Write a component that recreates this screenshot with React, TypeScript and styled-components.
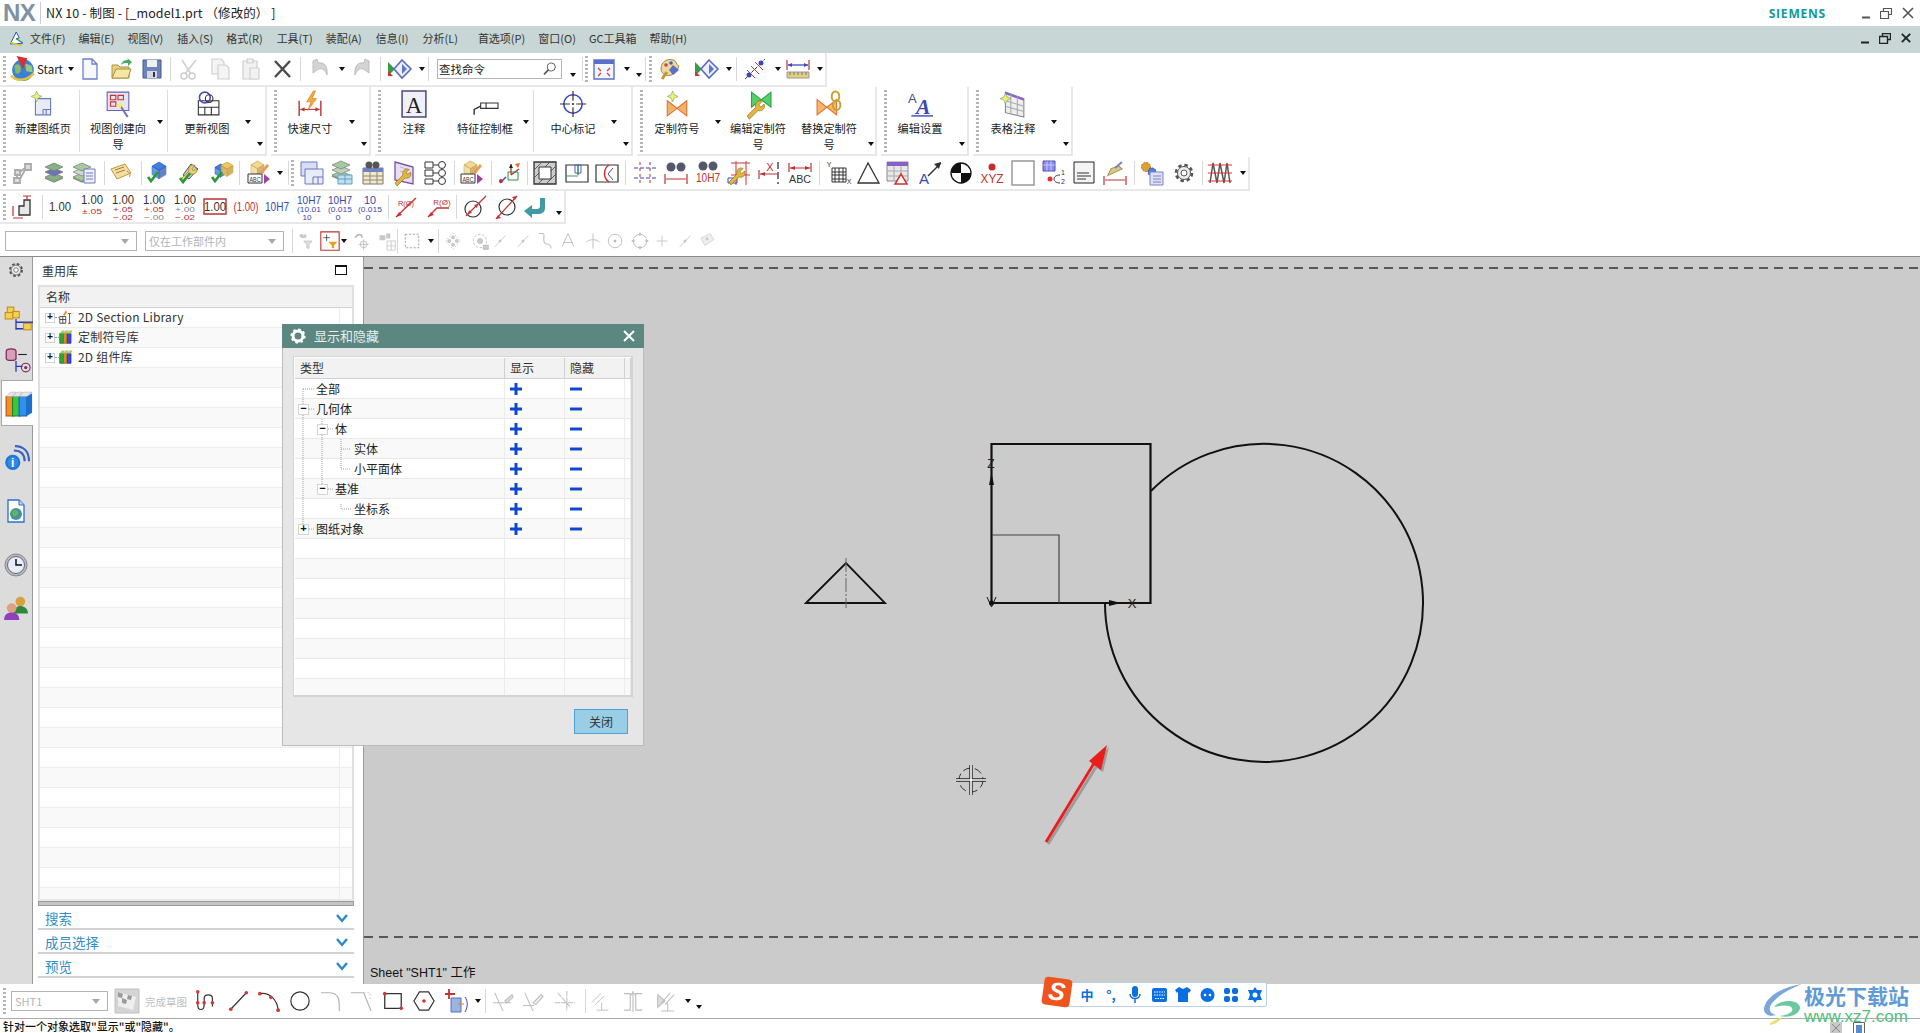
import React, { ReactNode } from 'react';
import styled, { createGlobalStyle } from 'styled-components';

const CJK = '"Noto Sans CJK SC", "Liberation Sans", sans-serif';

const Global = createGlobalStyle`
  html, body { margin: 0; padding: 0; background: #fff; overflow: hidden; }
  * { box-sizing: border-box; }
`;

const Page = styled.div`
  position: relative; width: 1920px; height: 1033px; overflow: hidden; display: flex; flex-direction: column;
  font-family: ${CJK}; color: #222; background: #fff;
`;

/* ---------- title + menu ---------- */
const TitleBar = styled.div`height: 26px; display: flex; align-items: center; flex: none;`;
const Logo = styled.div`
  width: 41px; height: 22px; padding-left: 3px; border-right: 1px solid #ccc;
  font: 700 24px/22px "Liberation Sans", sans-serif; color: #7d92a5; letter-spacing: -0.5px;
`;
const TitleText = styled.div`margin-left: 5px; margin-top: -2px; font-size: 12.5px; letter-spacing: 0.1px; white-space: pre;`;
const Brand = styled.div`
  margin-left: auto; margin-right: 36px; font: 700 12px "Open Sans", "Liberation Sans", sans-serif; color: #0d9a9c; letter-spacing: 0.8px;
`;
const WinButtons = styled.div`display: flex; align-items: center; gap: 10px; padding-right: 6px;`;
const MenuBar = styled.div`
  height: 27px; flex: none; background: #c8d6d5; display: flex; align-items: center; padding: 0 0 3px 4px; font-size: 11px; color: #333;
`;
const MenuIcon = styled.div`width: 22px; height: 18px; margin-right: 4px; display: flex; justify-content: flex-end;`;
const MenuItem = styled.span<{ $ml: number }>`margin-left: ${p => p.$ml}px; white-space: nowrap; line-height: 16px;`;

/* ---------- strips ---------- */
const Row = styled.div<{ $h: number }>`height: ${p => p.$h}px; flex: none; display: flex; background: #fff;`;
const StripBar = styled.div<{ $w: number }>`
  width: ${p => p.$w}px; height: 100%; display: flex; align-items: center; border-right: 2px solid #e8e8e8; border-bottom: 2px solid #e8e8e8;
`;
const BareBar = styled(StripBar)`border-right: none; border-bottom: none; padding-top: 2px;`;
const Slot = styled.div<{ $w: number; $ml: number }>`
  flex: none; width: ${p => p.$w}px; margin-left: ${p => p.$ml}px; display: flex; align-items: center; justify-content: center;
`;
const Grip = styled.div`
  width: 3px; height: 26px; background: repeating-linear-gradient(#b4b4b4 0 2px, transparent 2px 4px);
`;
const Sep = styled.div`width: 1px; height: 24px; background: #d8d8d8;`;
const Caret = styled.div<{ $low?: boolean }>`
  width: 0; height: 0; border-left: 3.5px solid transparent; border-right: 3.5px solid transparent; border-top: 4px solid #111;
  margin-top: ${p => (p.$low ? 12 : 0)}px;
`;
const StartLabel = styled.span`font-size: 11.5px; color: #222;`;
const SearchBox = styled.div`
  width: 125px; height: 20px; border: 1px solid #b5b5b5; display: flex; align-items: center; justify-content: space-between; padding: 0 3px 0 1px;
  font-size: 11.5px; color: #222;
`;
const SelectBox = styled.div<{ $w: number }>`
  width: ${p => p.$w}px; height: 20px; border: 1px solid #b4b4b4; display: flex; align-items: center; justify-content: space-between; padding: 0 7px 0 3px;
  font-size: 11px; color: #b4b4b4; white-space: nowrap;
`;
const GrayCaret = styled.div`
  width: 0; height: 0; border-left: 4px solid transparent; border-right: 4px solid transparent; border-top: 5px solid #a8a8a8;
`;
const FinishLabel = styled.span`font-size: 10.5px; color: #c0c0c0; white-space: nowrap;`;

/* ---------- ribbon ---------- */
const Ribbon = styled.div`height: 70px; flex: none; display: flex; gap: 4px;`;
const RibbonGroup = styled.div<{ $w: number }>`
  position: relative; width: ${p => p.$w}px; height: 69px; display: flex; border-right: 2px solid #e8e8e8; border-bottom: 2px solid #e8e8e8; padding-left: 4px;
`;
const RibbonGrip = styled.div`
  position: absolute; left: 3px; top: 3px; width: 3px; height: 62px;
  background: repeating-linear-gradient(#b4b4b4 0 2px, transparent 2px 4px);
`;
const RibbonMore = styled.div<{ $r: number }>`position: absolute; right: ${p => p.$r}px; bottom: 8px;`;
const RibbonItem = styled.div<{ $w: number; $line?: boolean; $lead: number }>`
  position: relative; flex: none; width: ${p => p.$w}px; height: 62px; margin-top: 3px; display: flex; padding-left: ${p => p.$lead}px;
  border-right: ${p => (p.$line ? '1px solid #dcdcdc' : 'none')};
`;
const RibbonBody = styled.div<{ $w: number }>`
  flex: none; width: ${p => p.$w}px; display: flex; flex-direction: column; align-items: center; padding-top: 1px;
`;
const RibbonLabel = styled.div`
  margin-top: 3px; font-size: 11.2px; line-height: 16px; text-align: center; white-space: nowrap; color: #222;
`;
const RibbonCaret = styled.div<{ $ml: number }>`margin-left: ${p => p.$ml}px; padding-top: 30px;`;

/* ---------- main ---------- */
const Main = styled.div`height: 728px; flex: none; display: flex; border-top: 1px solid #8a8a8a;`;
const SideTabs = styled.div`
  flex: none; width: 33px; background: #dcdcdc; border-right: 1px solid #9a9a9a; display: flex; flex-direction: column; align-items: center;
`;
const SideSlot = styled.div<{ $mt: number }>`margin-top: ${p => p.$mt}px; height: 24px; display: flex; align-items: center; justify-content: center;`;
const ActiveTab = styled.div`
  margin-top: 7px; width: 33px; height: 46px; margin-left: 2px; background: #fff; border: 1px solid #a8a8a8; border-right: none;
  display: flex; align-items: center; justify-content: center;
`;
const Panel = styled.div`flex: none; width: 331px; background: #fff; border-right: 1px solid #9a9a9a; padding: 0 9px 0 5px; display: flex; flex-direction: column;`;
const PanelHead = styled.div`height: 28px; display: flex; align-items: center; justify-content: space-between; padding: 0 7px 2px 4px; font-size: 12px; color: #333;`;
const MaxBox = styled.div`width: 12px; height: 10px; border: 1px solid #111; border-top-width: 2px;`;
const LibTable = styled.div`height: 616px; border: 2px solid #e0e0e0; border-bottom-color: #e8e8e8; overflow: hidden; flex: none;`;
const LibHead = styled.div`height: 21px; background: #f2f2f2; border-bottom: 1px solid #d4d4d4; padding-left: 6px; font-size: 12px; line-height: 19px; color: #333;`;
const LibRow = styled.div<{ $alt: boolean }>`
  height: 20px; display: flex; align-items: center; background: ${p => (p.$alt ? '#f9f9f9' : '#fff')}; border-bottom: 1px solid #ececec; position: relative;
  &::after { content: ''; position: absolute; left: 299px; top: 0; bottom: 0; width: 1px; background: #ececec; }
`;
const ExpanderGap = styled.span`width: 5px; flex: none;`;
const Expander = styled.div`
  flex: none; width: 10px; height: 10px; border: 1px solid #d0d0d0; background: #fff; font: 700 10px/8px "Liberation Mono", monospace; text-align: center; color: #111;
`;
const LibLabel = styled.span`margin-left: 1px; margin-top: -2px; font-size: 12px; letter-spacing: 0.2px; color: #333; white-space: nowrap;`;
const Dots = styled.div`width: 4px; height: 0; border-top: 1px dotted #999; flex: none;`;
const Grabber = styled.div`height: 5px; flex: none; background: #c4c4c4; border: 1px solid #9a9a9a;`;
const Section = styled.div`
  height: 24px; flex: none; border-bottom: 2px solid #d2d2d2; display: flex; align-items: center; justify-content: space-between; padding: 2px 6px 0 7px;
  font-size: 13.5px; color: #2f8fc6;
`;
const Canvas = styled.div`position: relative; flex: 1; background: #cbcbcb; overflow: hidden;`;
const SheetLabel = styled.div`
  position: absolute; left: 6px; bottom: 3px; font: 12.5px "Liberation Sans", ${CJK}; color: #111; white-space: nowrap;
`;

/* ---------- dialog ---------- */
const Dialog = styled.div`
  position: absolute; left: 282px; top: 324px; width: 362px; height: 422px; background: #e6e6e6; border: 1px solid #bcbcbc; display: flex; flex-direction: column;
`;
const DialogTitle = styled.div`
  height: 24px; flex: none; margin: -1px -1px 0; background: #5c8780; display: flex; align-items: center; padding: 0 9px 2px 8px; color: #e6efed; font-size: 13px; gap: 8px;
`;
const DialogGear = styled.div`display: flex; margin-top: 2px;`;
const DialogClose = styled.div`margin-left: auto; display: flex; margin-top: 2px;`;
const TypeTable = styled.div`
  position: relative; margin: 8px 10px 0; height: 341px; flex: none; background: #fff; border: 1px solid #d4d4d4; border-width: 1px 2px 2px 1px; padding: 1px 0 0 1px; overflow: hidden;
`;
const GridRow = styled.div<{ $alt?: boolean; $head?: boolean }>`
  height: ${p => (p.$head ? 21 : 20)}px; display: grid; grid-template-columns: 210px 60px 60px 1fr; align-items: stretch;
  background: ${p => (p.$head ? '#f2f2f2' : p.$alt ? '#f9f9f9' : '#fff')};
  border-bottom: 1px solid ${p => (p.$head ? '#d0d0d0' : '#e8e8e8')}; font-size: 12px; line-height: 20px; color: #222;
`;
const HeadCell = styled.div`padding-left: 5px; border-right: 1px solid #d0d0d0; color: #333;`;
const Cell = styled.div`border-right: 1px solid #ececec; display: flex; align-items: center; padding-left: 5px;`;
const TreeCell = styled.div<{ $lvl: number }>`
  position: relative; z-index: 1; border-right: 1px solid #ececec; display: flex; align-items: center; padding-left: ${p => 3 + p.$lvl * 19}px; white-space: nowrap;
`;
const TreeBox = styled.div<{ $empty?: boolean }>`
  flex: none; width: 11px; height: 11px; margin-right: 7px; font: 700 11px/9px "Liberation Mono", monospace; text-align: center; color: #111;
  border: 1px solid ${p => (p.$empty ? 'transparent' : '#d4d4d4')}; background: ${p => (p.$empty ? 'transparent' : '#fff')};
`;
const TreeGuides = styled.svg`position: absolute; left: 0; top: 22px; pointer-events: none;`;
const DialogFoot = styled.div`flex: 1; display: flex; align-items: flex-start; justify-content: flex-end; padding: 12px 15px 0 0;`;
const CloseBtn = styled.div`
  width: 54px; height: 25px; background: #9acde6; border: 1px solid #4aa3d8; text-align: center; font-size: 12px; line-height: 23px; color: #333;
`;

/* ---------- bottom ---------- */
const BottomBar = styled.div`height: 34px; flex: none; display: flex; background: #fff;`;
const Status = styled.div`
  height: 15px; flex: none; border-top: 1px solid #aaa; padding-left: 3px; font-size: 11px; font-weight: 500; line-height: 14px; color: #111; white-space: nowrap;
`;
const StatusIcons = styled.div`position: absolute; left: 1830px; top: 1022px; display: flex; gap: 11px;`;

const Sogou = styled.div`
  position: absolute; left: 1060px; top: 982px; width: 207px; height: 25px; background: #fff; border: 1px solid #b8d0ea; border-radius: 2px;
  display: flex; align-items: center; padding-left: 14px; color: #0a6fe0;
`;
const SogouChar = styled.span`width: 24px; text-align: center; font-weight: 700; font-size: 13px; flex: none; line-height: 16px;`;
const SogouSlot = styled.div`width: 24px; flex: none; display: flex; justify-content: center;`;
const SogouLogo = styled.div`
  position: absolute; left: 1043px; top: 978px; width: 28px; height: 28px; background: #f0541e; border-radius: 4px; transform: rotate(8deg);
  color: #fff; font: italic 900 25px/27px "Liberation Sans", sans-serif; text-align: center;
`;
const Watermark = styled.div`position: absolute; left: 1762px; top: 983px; width: 150px; height: 42px; display: flex;`;
const WmText = styled.div`margin-left: 0; display: flex; flex-direction: column;`;
const WmMain = styled.div`font-size: 21px; font-weight: 700; line-height: 24px; color: #5f9bd6;`;
const WmSub = styled.div`font: 17px/20px "Liberation Sans", sans-serif; color: #52c07c;`;

/* ---------- icons ---------- */
const Txt = ({ x = 12, y, s = 9, c = '#333', w = 400, len, a = 'middle', children }: any) => (
  <text x={x} y={y} fontSize={s} fill={c} fontWeight={w} textAnchor={a} fontFamily='"Liberation Sans", sans-serif'
    textLength={len} lengthAdjust={len ? 'spacingAndGlyphs' : undefined}>{children}</text>
);
const Dim = ({ top = '1.00', l1, l2, c1 = '#b33', c2 = '#b33', tc = '#333', tone }: any) => (
  <>
    <Txt x={15} y={tone ? 20 : 13} s={tone ? 13 : 12} c={tc} len={22}>{top}</Txt>
    {l1 && <Txt x={15} y={l2 ? 21 : 23} s={8} c={c1} len={20}>{l1}</Txt>}
    {l2 && <Txt x={15} y={29} s={8} c={c2} len={20}>{l2}</Txt>}
  </>
);
const Fit = ({ a, b, c = '#3946b0', top }: any) => (
  <>
    <Txt x={15} y={13} s={11} c={c} len={top.length > 2 ? 24 : 12}>{top}</Txt>
    <Txt x={15} y={21} s={7.500} c={c} len={24}>{a}</Txt>
    <Txt x={13} y={29} s={7.500} c={c} len={b.length > 1 ? 9 : 5}>{b}</Txt>
  </>
);

const cube = (x: number, y: number, s: number, f: string, d: string) => (
  <>
    <path d={`M${x} ${y + s * .3}l${s * .5} -${s * .3} ${s * .5} ${s * .3} -${s * .5} ${s * .3}z`} fill={f} stroke={d} strokeWidth=".6" />
    <path d={`M${x} ${y + s * .3}v${s * .6}l${s * .5} ${s * .3}v-${s * .6}z`} fill={f} stroke={d} strokeWidth=".6" opacity=".8" />
    <path d={`M${x + s} ${y + s * .3}v${s * .6}l-${s * .5} ${s * .3}v-${s * .6}z`} fill={d} stroke={d} strokeWidth=".6" opacity=".7" />
  </>
);
const check = (x: number, y: number) => <path d={`M${x} ${y}l3 4 7-9`} stroke="#2b9a35" strokeWidth="2.6" fill="none" />;
const layers = (c1: string, c2: string) => (
  <>
    {[15, 10, 5].map((y, i) => <path key={y} d={`M12 ${y - 3}l9 4-9 4-9-4z`} fill={i === 1 ? c2 : c1} stroke="#6e7e6e" strokeWidth=".7" />)}
    <path d="M3 17l9 4 9-4" fill="none" stroke="#7d9a7d" strokeWidth="1.4" />
  </>
);
const wrench = (c = '#e2b440') => <path d="M3 21l8-8c-1-3 1-6 4-6l2 .5-3 3 1.5 2.500 3-3 .5 2c0 3-3 5-6 4l-8 8z" fill={c} stroke="#9a7a20" strokeWidth=".7" />;

const ICONS: Record<string, ReactNode> = {
  nxmenu: <><path d="M3 20L11 4l4 8-4 1 9 6z" fill="#fff" stroke="#2c52b0" strokeWidth="1.3" /><path d="M3 18l15 4" stroke="#e2c020" strokeWidth="2" /><path d="M11 13l8 5" stroke="#2aa050" strokeWidth="1.4" /></>,
  start: <><circle cx="12" cy="13" r="10" fill="#3c80d4" /><path d="M4 9c3-3 6-1 6 3s-3 5-5 4z" fill="#86b968" /><path d="M14 7l6 2 1 6-6-1z" fill="#99c780" /><path d="M6 0l10 2-4 10z" fill="#d6322c" /><path d="M1 18c5 6 14 5 21-2" stroke="#e6c23c" strokeWidth="2.400" fill="none" /></>,
  newdoc: <path d="M5 2h9l5 5v15H5z M14 2v5h5" fill="#f7f8ff" stroke="#6c80cc" strokeWidth="1.3" />,
  open: <><path d="M3 21V8h6l2 2h9v11z" fill="#e8d27e" stroke="#a89040" /><path d="M3 21l4-9h15l-3 9z" fill="#f5e6a6" stroke="#a89040" /><path d="M12 8c1-4 4-5 7-5l-1-2 5 4-4 4v-3c-3 0-5 0-7 2z" fill="#48a860" /></>,
  save: <><path d="M3 3h18v18H3z" fill="#6e84b8" stroke="#45588a" /><path d="M7 3h10v7H7z" fill="#eef0f6" /><path d="M7 14h10v7H7z" fill="#d4d8e4" /><path d="M13 15h2v5h-2z" fill="#333" /></>,
  scissors: <g fill="none" stroke="#cfcfcf" strokeWidth="1.500"><circle cx="7" cy="19" r="3" /><circle cx="15" cy="19" r="3" /><path d="M8 17L19 3M14 17L5 3" /></g>,
  copy: <g fill="#f4f4f4" stroke="#cfcfcf" strokeWidth="1.200"><path d="M4 2h9l3 3v12H4z" /><path d="M10 8h8l3 3v11H10z" /></g>,
  paste: <g fill="#f2f2f2" stroke="#cfcfcf" strokeWidth="1.200"><path d="M4 4h14v18H4z" /><path d="M8 2h6v4H8z" /><path d="M11 11h9v11h-9z" /></g>,
  del: <path d="M5 4l15 16M20 4L5 20" stroke="#4a4a4a" strokeWidth="2.400" />,
  undo: <path d="M5 4v12l4-3c4-3 8-1 10 5 1-9-3-13-9-12l-1-4z" fill="#d4d4d4" stroke="#bdbdbd" />,
  redo: <path d="M19 4v12l-4-3c-4-3-8-1-10 5-1-9 3-13 9-12l1-4z" fill="#d4d4d4" stroke="#bdbdbd" />,
  play: <><path d="M1 5l7 7-7 7z" fill="#3a9a4a" /><path d="M1 14l5 5H1z" fill="#d03030" /><path d="M15 3l9 9-9 9-8-9z" fill="#eef" stroke="#5a6cc0" strokeWidth="1.600" /><path d="M15 7l5 5-5 5z" fill="#5a78d0" /></>,
  magnifier: <><circle cx="14" cy="9" r="6" fill="#fff" stroke="#555" strokeWidth="1.400" /><path d="M10 13l-7 7" stroke="#555" strokeWidth="2.400" /></>,
  viewfit: <><path d="M2 3h20v19H2z" fill="#f4f6ff" stroke="#5a70c8" strokeWidth="1.400" /><path d="M2 3h20v4H2z" fill="#5a70c8" /><path d="M6 11l3 3M18 11l-3 3M6 19l3-3M18 19l-3-3" stroke="#d04030" strokeWidth="1.300" /></>,
  palette: <><path d="M3 12C3 5 9 1 15 3c4 1 3 5 6 6-2 6-7 11-13 9-3-1-5-3-5-6z" fill="#ecd9a0" stroke="#a08840" /><circle cx="8" cy="8" r="1.800" fill="#d04040" /><circle cx="13" cy="6" r="1.800" fill="#4060c0" /><path d="M15 8l6 5-6 5-4-5z" fill="#5a70c8" /><path d="M4 22l5-7" stroke="#c09830" strokeWidth="3" /></>,
  measure: <><path d="M2 22L22 2" stroke="#444" strokeDasharray="8 1" /><path d="M4 13l8 8M8 9l8 8M12 5l8 8" stroke="#d03838" /><circle cx="6" cy="18" r="2.500" fill="#3a48b8" /><circle cx="18" cy="6" r="2.500" fill="#3a48b8" /></>,
  ruler: <><path d="M1 3v10M23 3v10" stroke="#b33" strokeWidth="1.200" /><path d="M2 8h20" stroke="#3a48b8" strokeWidth="1.300" /><path d="M2 8l4-2v4zM22 8l-4-2v4z" fill="#3a48b8" /><path d="M1 15h22v6H1z" fill="#e0cf80" stroke="#999" /><path d="M4 15v3M8 15v3M12 15v3M16 15v3M20 15v3" stroke="#666" strokeWidth=".8" /></>,

  newsheet: <><path d="M5 7l14 0v15H5z" fill="#e8ecf8" stroke="#6a78c0" /><path d="M12 17h7M12 17v5M15 17v5" stroke="#6a78c0" /><path d="M6 0l1.500 3.500L11 5 7.500 6.500 6 10 4.500 6.500 1 5l3.500-1.500z" fill="#f2ee70" stroke="#6ea890" strokeWidth=".6" /></>,
  viewwiz: <><path d="M2 1h20v17H2z" fill="#e4e4f4" stroke="#6a60b0" /><path d="M5 4h5v4H5zM12 4h5v4h-5zM5 10h5v4H5z" fill="none" stroke="#c83030" /><path d="M13 12l8 12" stroke="#7a70c8" strokeWidth="2" /><path d="M14 9l1 3 3 1-3 1-1 3-1-3-3-1 3-1z" fill="#f4f060" /></>,
  updview: <><path d="M4 9h19v6H4zM4 15h19v7H4zM10 15v7M16 15v7" fill="#fff" stroke="#333" /><circle cx="10" cy="6" r="5" fill="none" stroke="#4a50c0" strokeWidth="1.500" /><circle cx="14" cy="7" r="3.500" fill="none" stroke="#333" /></>,
  quickdim: <><path d="M2 9v14M22 9v14" stroke="#b33" strokeWidth="1.300" /><path d="M3 17h18" stroke="#b33" /><path d="M3 17l4-2v4zM21 17l-4-2v4z" fill="#b33" /><path d="M15 0l-6 10h4l-3 8 8-11h-4l3-7z" fill="#f0b030" stroke="#d86020" strokeWidth=".5" /></>,
  noteA: <><path d="M1 0h22v24H1z" fill="#f0f0fa" stroke="#4a4a80" strokeWidth="1.400" /><text x="12" y="20" fontSize="21" textAnchor="middle" fontFamily='"Liberation Serif", serif' fill="#222">A</text></>,
  fcf: <><path d="M8 11h16v5H8z" fill="#fff" stroke="#333" /><path d="M13 11v5" stroke="#333" /><path d="M8 14L2 17v5" fill="none" stroke="#333" strokeWidth="1.300" /></>,
  center: <><circle cx="12" cy="12" r="8.500" fill="none" stroke="#3a48b8" strokeWidth="1.400" /><path d="M12 0v9M12 11v2M12 15v9M0 12h9M11 12h2M15 12h9" stroke="#333" strokeWidth="1.100" /></>,
  custsym: <><path d="M3 9l9 7-9 7zM21 9l-9 7 9 7z" fill="#f0b468" stroke="#e07030" /><path d="M8 0l1.500 3.500L13 5 9.500 6.500 8 10 6.500 6.500 3 5l3.500-1.500z" fill="#f4f060" stroke="#70a090" strokeWidth=".6" /></>,
  editsym: <><path d="M6 1l9 7-9 7zM24 1l-9 7 9 7z" fill="#52d06a" stroke="#30a050" /><g transform="translate(-1 2)">{wrench()}</g></>,
  replsym: <><path d="M1 8l9 7-9 7zM19 8l-9 7 9 7z" fill="#f4b868" stroke="#e07030" /><ellipse cx="18" cy="5" rx="3.500" ry="4.500" fill="none" stroke="#c8a030" strokeWidth="1.800" /><ellipse cx="19" cy="13" rx="3.500" ry="4.500" fill="none" stroke="#c8a030" strokeWidth="1.800" /></>,
  editset: <><text x="5" y="11" fontSize="12" fontFamily='"Liberation Sans", sans-serif' fill="#4a4a88" textAnchor="middle">A</text><text x="15" y="21" fontSize="20" fontWeight="700" fontStyle="italic" fontFamily='"Liberation Serif", serif' fill="#3a48b8" textAnchor="middle">A</text><path d="M4 23h20" stroke="#3a48b8" strokeWidth="1.300" /></>,
  tablenote: <><path d="M5 1l17 6v17L5 20z" fill="#eee" stroke="#888" /><path d="M5 1l17 6v2L5 3z" fill="#8a60c8" /><path d="M5 9l17 5M5 14l17 5M10 3v18M16 5v18" stroke="#aaa" /><path d="M5 2l1.500 3.500L10 7 6.500 8.500 5 12 3.500 8.500 0 7l3.500-1.500z" fill="#f4f060" stroke="#70a090" strokeWidth=".6" /></>,

  assy: <g fill="none" stroke="#aaa" strokeWidth="1.800"><path d="M4 9h5v5H4zM14 3h6v6h-6zM3 17h6v5H3z" fill="#ddd" /><path d="M9 11l5-4M6 14v3M14 9l-5 9" /></g>,
  layerA: layers('#88b080', '#7070c0'),
  layerL: <><g transform="translate(-3 0)">{layers('#a8c8a0', '#d0d8d0')}</g><path d="M11 8h11v14H11z" fill="#eef0fa" stroke="#7078b8" /><path d="M13 12h7M13 15h7M13 18h7" stroke="#7078b8" /></>,
  note: <><path d="M2 8l14-5 6 9-14 6z" fill="#f4dea0" stroke="#c09840" /><path d="M6 9l9-3M7 12l9-3" stroke="#a08040" /><path d="M18 10c3 2 4 5 2 6" stroke="#c08040" fill="none" /></>,
  cubeOk: <>{cube(6, 1, 14, '#3f7fe0', '#1f4fa8')}{check(2, 16)}</>,
  toolOk: <><path d="M5 14L13 3l7 5-9 10z" fill="#c8c8ee" stroke="#555" /><g transform="translate(0 -3)">{wrench('#e8d070')}</g>{check(2, 17)}</>,
  cube2Ok: <>{cube(5, 3, 11, '#3f7fe0', '#1f4fa8')}{cube(11, 1, 12, '#f0c860', '#c09020')}{check(2, 16)}</>,
  cubeAbc: <>{cube(5, 0, 13, '#f2d890', '#c09840')}<path d="M2 13h14v9H2z" fill="#fff" stroke="#333" /><Txt x={9} y={21} s={7} len={11}>ABC</Txt><path d="M18 13l6 5-6 5z" fill="#a040a0" /><path d="M14 11l7-8 2 2-7 8z" fill="#f09850" /></>,
  sheetView: <><path d="M2 1h16v14H2z" fill="#d8def4" stroke="#6a78c0" /><path d="M6 8h18v15H6z" fill="#e8ecf8" stroke="#6a78c0" /><path d="M14 16h10M14 16v7M19 16v7" stroke="#6a78c0" /></>,
  layerV: <><g transform="translate(-1 -2)">{layers('#a8c8a0', '#c0d0c0')}</g><path d="M8 14h14v9H8z" fill="#bfe0ee" stroke="#60a0c0" /><path d="M15 14v9M8 18h14" stroke="#60a0c0" /></>,
  tableBino: <><path d="M2 7h20v16H2z" fill="#f6e8c0" stroke="#777" /><path d="M2 7h20v4H2z" fill="#7080d0" /><path d="M2 15h20M2 19h20M9 7v16M16 7v16" stroke="#888" /><circle cx="8" cy="4" r="3.500" fill="#555" /><circle cx="15" cy="4" r="3.500" fill="#555" /></>,
  wrenchPage: <><path d="M3 1l18 5v17L3 19z" fill="#e8e0f0" stroke="#7a50a8" strokeWidth="1.300" /><path d="M8 6l10 3M8 10l10 3" stroke="#bbb" /><g transform="translate(0 1)">{wrench()}</g></>,
  list123: <g fill="#fff" stroke="#333"><circle cx="19" cy="4" r="3.500" /><circle cx="19" cy="12" r="3.500" /><circle cx="19" cy="20" r="3.500" /><path d="M2 1h8v6H2zM2 9h8v6H2zM2 18h8v5H2z" /><path d="M10 4h5M10 12h5M10 20h5" fill="none" /></g>,
  axes: <><path d="M13 14V3M13 14l8-6" stroke="#c03030" strokeWidth="1.300" /><path d="M10 11h10v8H10z" fill="none" stroke="#2a9040" /><path d="M13 3l-2 4h4z" fill="#222" /><path d="M2 22l6-6" stroke="#3a48b8" strokeWidth="1.500" /><circle cx="3" cy="20" r="2" fill="#c03030" /><path d="M17 3l5-1-2 5z" fill="#e07030" /></>,
  hatch: <><path d="M1 1h22v22H1z" fill="#ccc" stroke="#333" strokeWidth="1.300" /><path d="M1 9L9 1M1 17L17 1M5 23L23 5M13 23L23 13" stroke="#555" strokeWidth=".9" /><path d="M6 6h12v12H6z" fill="#fff" stroke="#333" /></>,
  sectBox: <><path d="M1 4h22v17H1z" fill="#fff" stroke="#333" strokeWidth="1.200" /><path d="M13 4v10" stroke="#2a9040" strokeWidth="1.500" /><path d="M10 4h6v8h-6z" fill="none" stroke="#5060c0" /><path d="M1 15h12" stroke="#3aa050" /></>,
  detail: <><path d="M1 4h22v17H1z" fill="#fff" stroke="#333" strokeWidth="1.200" /><path d="M14 4c-6 4-6 13 0 17" fill="none" stroke="#d03030" strokeWidth="1.500" /><path d="M18 7l-5 6 5 6" fill="none" stroke="#3a48b8" /></>,
  clines: <g stroke="#c84040" strokeWidth="1.100" fill="none"><path d="M1 7h22" strokeDasharray="4 2" stroke="#3a48b8" /><path d="M1 17h22" strokeDasharray="4 2" stroke="#3a48b8" /><path d="M7 1v22M17 1v22" strokeDasharray="3 3" /></g>,
  binoDim: <><circle cx="7" cy="6" r="4.500" fill="#55586a" /><circle cx="17" cy="6" r="4.500" fill="#55586a" /><path d="M1 13v10M23 13v10" stroke="#b33" strokeWidth="1.200" /><path d="M2 18h20" stroke="#b33" /></>,
  h7Bino: <><circle cx="7" cy="5" r="4.500" fill="#55586a" /><circle cx="17" cy="5" r="4.500" fill="#55586a" /><Txt y={21} s={12} c="#b33" len={24}>10H7</Txt></>,
  wrenchGrid: <><path d="M6 1h18v18H6z" fill="#f6f6f6" /><path d="M5 2h19M5 14h19M10 0v24M20 0v24" stroke="#c84040" /><path d="M2 17h9v5H2z" fill="none" stroke="#3a48b8" />{wrench()}</>,
  dimX: <><path d="M21 1v22" stroke="#333" strokeDasharray="7 3" strokeWidth="1.300" /><path d="M2 9v9" stroke="#b33" strokeWidth="1.200" /><path d="M3 13h17" stroke="#b33" /><path d="M3 13l5-2v4z" fill="#b33" /><Txt x={13} y={10} s={11} c="#b33">X</Txt></>,
  dimAbc: <><path d="M1 2v9M23 2v9" stroke="#b33" strokeWidth="1.200" /><path d="M2 7h20" stroke="#b33" /><path d="M2 7l5-2v4zM22 7l-5-2v4z" fill="#b33" /><Txt y={22} s={11} c="#333" len={22}>ABC</Txt></>,
  gridXY: <><path d="M6 7h14v14H6z" fill="#fff" stroke="#333" /><path d="M9 7v14M13 7v14M17 7v14M6 11h14M6 14h14M6 18h14" stroke="#333" /><Txt x={3} y={6} s={7}>Y</Txt><Txt x={23} y={23} s={7}>X</Txt></>,
  tri: <path d="M12 2L2 22h21z" fill="none" stroke="#333" strokeWidth="1.300" />,
  tableTri: <><path d="M1 1h21v19H1z" fill="#e8e8e8" stroke="#888" /><path d="M1 1h21v4H1z" fill="#8a60c8" /><path d="M1 10h21M1 15h21M8 5v15M15 5v15" stroke="#aaa" /><path d="M15 13l-6 10h12z" fill="#fff" stroke="#d03030" strokeWidth="1.500" /></>,
  arrowA: <><path d="M10 15L23 2" stroke="#333" strokeWidth="1.400" /><path d="M23 1l-7 2 5 5z" fill="#333" /><Txt x={6} y={23} s={15} c="#3a48b8">A</Txt></>,
  checker: <><circle cx="12" cy="12" r="10" fill="#fff" stroke="#111" strokeWidth="1.300" /><path d="M12 2a10 10 0 0 0-10 10h10zM12 12h10a10 10 0 0 1-10 10z" fill="#111" /></>,
  xyz: <><circle cx="12" cy="6" r="3.500" fill="#d02828" /><Txt y={22} s={12} c="#b33" len={23}>XYZ</Txt></>,
  blank: <path d="M1 0h22v24H1z" fill="#fff" stroke="#999" strokeWidth="1.500" />,
  balloon: <><path d="M1 0h12v10H1z" fill="#8c8cf0" stroke="#5050b0" /><path d="M1 4h12M5 0v10M9 0v10" stroke="#fff" strokeWidth=".5" /><circle cx="8" cy="18" r="2.500" fill="#e03030" /><path d="M18 14c-4 0-6 2-6 4s2 4 6 4" fill="none" stroke="#333" /><Txt x={21} y={14} s={7}>1</Txt><Txt x={21} y={23} s={7}>2</Txt></>,
  textBox: <><path d="M2 1h20v21H2z" fill="#f4f4f4" stroke="#222" /><path d="M5 12h12M5 15h14M5 18h9" stroke="#333" strokeWidth="1.200" /></>,
  broom: <><path d="M3 11h16l-2-4-8-1z" fill="#d8c888" stroke="#a09050" transform="rotate(-25 12 9)" /><path d="M12 7l7-6" stroke="#7880c8" strokeWidth="2" /><path d="M1 15v9M23 15v9" stroke="#b33" strokeWidth="1.200" /><path d="M2 19h20" stroke="#b33" /></>,
  gearList: <><circle cx="6" cy="6" r="4.500" fill="#e0a030" stroke="#a87020" strokeDasharray="2 1" /><circle cx="12" cy="11" r="4" fill="#5080d8" stroke="#3050a0" strokeDasharray="2 1" /><path d="M10 11h13v13H10z" fill="#dde2fa" stroke="#7a80c8" /><path d="M13 15h8M13 18h8M13 21h8" stroke="#7a80c8" /></>,
  gear: <><circle cx="12" cy="12" r="8" fill="none" stroke="#555" strokeWidth="2.600" strokeDasharray="3.500 2.800" /><circle cx="12" cy="12" r="6.500" fill="#eee" stroke="#555" /><circle cx="12" cy="12" r="3" fill="#fff" stroke="#555" /></>,
  wave: <><path d="M2 22L5 2l4 20 3-20 4 20 3-20 3 20" fill="none" stroke="#555" strokeWidth="1.500" /><path d="M0 4h24M0 12h24M0 20h24" stroke="#e03030" strokeWidth="1.100" /></>,

  tolIcon: <><path d="M9 20V11h5V5h6v15z" fill="#e8e8e8" stroke="#333" strokeWidth="1.300" /><path d="M13 1h8M17 1v4M3 23h10M3 11v10" stroke="#c83030" strokeWidth="1.200" /></>,
  d100: <Dim tone />,
  dPm: <Dim l1="±.05" />,
  dPP: <Dim l1="+.05" l2="−.02" />,
  dPZ: <Dim l1="+.05" l2="−.00" c2="#888" />,
  dZP: <Dim l1="+.00" l2="−.02" c1="#888" />,
  dBox: <><path d="M4 8h22v15H4z" fill="none" stroke="#b33" strokeWidth="1.400" /><Dim tone /></>,
  dParen: <Txt x={15} y={20} s={13} c="#b33" len={25}>(1.00)</Txt>,
  h7: <Txt x={15} y={20} s={13} c="#3946b0" len={24}>10H7</Txt>,
  h7a: <Fit top="10H7" a="(10.01" b="10" />,
  h7b: <Fit top="10H7" a="(0.015" b="0" />,
  h7c: <Fit top="10" a="(0.015" b="0" />,
  rSlash: <><path d="M2 22L22 3" stroke="#c83030" strokeWidth="1.300" /><path d="M2 22l6-2-3-3z" fill="#c83030" /><Txt x={12} y={11} s={7.5} c="#b33">R(Ø)</Txt></>,
  rFlat: <><path d="M2 22l9-9h12" fill="none" stroke="#c83030" strokeWidth="1.300" /><path d="M2 22l6-2-3-3z" fill="#c83030" /><Txt x={16} y={10} s={8} c="#b33">R(Ø)</Txt></>,
  dia1: <><circle cx="10" cy="14" r="8" fill="none" stroke="#333" strokeWidth="1.200" /><path d="M3 21L23 1" stroke="#c83030" strokeWidth="1.200" /><path d="M15 9l-4 1 3 3zM5 19l4-1-3-3z" fill="#c83030" /></>,
  dia2: <><circle cx="13" cy="12" r="8" fill="none" stroke="#333" strokeWidth="1.200" /><path d="M2 24L23 1" stroke="#c83030" strokeWidth="1.200" /><path d="M2 24l5-1-3-3zM23 1l-5 1 3 3z" fill="#c83030" /></>,
  turn: <path d="M22 3v10c0 4-3 6-7 6H9v4L1 16l8-6v4h5c2 0 3-1 3-3V3z" fill="#3f9aa6" />,

  gFilter: <><path d="M3 5c2-3 4-3 6 0l2-3 2 4c-2 3-8 3-10-1z" fill="#c8c8c8" /><path d="M9 12h11l-4 5v5l-3-1v-4z" fill="#dedede" stroke="#c0c0c0" /></>,
  boxFilter: <><path d="M1 1h22v22H1z" fill="#fff" stroke="#c03030" strokeWidth="1.300" /><path d="M8 4v8M4 8h8" stroke="#444" /><path d="M10 13h11l-4 4v4l-3-1v-3z" fill="#e8a020" /></>,
  gSnap: <><path d="M4 8c2-5 8-5 8 0" fill="none" stroke="#bbb" strokeWidth="2" /><path d="M14 10v13M8 16h12" stroke="#bbb" /><circle cx="14" cy="16" r="4" fill="none" stroke="#bbb" /></>,
  gTool: <><path d="M3 5h7v6H3z M11 3h5v6h-5z" fill="#c8c8c8" /><path d="M12 12h10v11H12z" fill="#fff" stroke="#c4c4c4" /><path d="M17 12v11M12 18h10" stroke="#c4c4c4" /></>,
  gSelect: <path d="M3 3h18v18H3z" fill="none" stroke="#aaa" strokeWidth="1.400" strokeDasharray="3 2" />,
  gDots: <g fill="#ccc" stroke="#bbb"><path d="M12 1l10 11-10 11L2 12z" fill="none" strokeDasharray="2 2" /><circle cx="12" cy="7" r="2" /><circle cx="7" cy="12" r="2" /><circle cx="17" cy="12" r="2" /><circle cx="12" cy="17" r="2" /></g>,
  gDots2: <g fill="#ccc" stroke="#bbb"><circle cx="12" cy="12" r="8" fill="none" strokeDasharray="3 2" /><circle cx="12" cy="12" r="3" /><path d="M16 17h6v5h-6z" /></g>,
  gLine: <g stroke="#c4c4c4" strokeWidth="1.300"><path d="M4 21L20 4" /><circle cx="12" cy="12" r="1.500" fill="#bbb" /></g>,
  gCurve: <path d="M4 2h5c4 0-1 10 3 13 3 2 8 0 8 7" fill="none" stroke="#c0c0c0" strokeWidth="1.500" />,
  gAxis: <path d="M12 2L4 20M12 2l8 18M6 14h12" fill="none" stroke="#c0c0c0" strokeWidth="1.300" />,
  gTee: <path d="M12 2v20M3 14c3-5 15-5 18 0" fill="none" stroke="#c0c0c0" strokeWidth="1.300" />,
  gRing: <><circle cx="12" cy="12" r="9" fill="none" stroke="#c0c0c0" strokeWidth="1.300" /><circle cx="12" cy="12" r="2" fill="#bbb" /></>,
  gRing2: <><circle cx="12" cy="12" r="9" fill="none" stroke="#c0c0c0" strokeWidth="1.300" /><path d="M12 1v4M12 19v4M1 12h4M19 12h4" stroke="#bbb" strokeWidth="2" /></>,
  gPlus: <path d="M12 4v16M4 12h16" stroke="#c0c0c0" strokeWidth="1.300" />,
  gPage: <><path d="M4 8l12-6 5 8-12 8z" fill="#eee" stroke="#ccc" /><circle cx="12" cy="9" r="2" fill="#ccc" /></>,

  flag: <><path d="M0 0h24v24H0z" fill="#d4d4d4" stroke="#c0c0c0" /><path d="M3 3l18 5-3 13L3 17z" fill="#eee" /><path d="M3 3l5 2-1 4-4-1zM13 6l4 1-1 4-4-1zM7 9l5 2-1 4-4-1z" fill="#9a9a9a" /></>,
  skCurve: <><path d="M3 2v14c0 7 7 7 7 0V9c0-5 9-5 9 0v9" fill="none" stroke="#333" strokeWidth="1.300" /><g fill="#d03838"><circle cx="3" cy="2" r="2" /><circle cx="3" cy="14" r="2" /><circle cx="10" cy="14" r="2" /><circle cx="19" cy="14" r="2" /></g></>,
  skLine: <><path d="M3 21L20 3" stroke="#333" strokeWidth="1.300" /><circle cx="3" cy="21" r="2" fill="#d03838" /><circle cx="20" cy="3" r="2" fill="#d03838" /></>,
  skArc: <><path d="M2 4c10-2 19 6 20 18" fill="none" stroke="#333" strokeWidth="1.300" /><circle cx="2" cy="4" r="2" fill="#d03838" /><circle cx="14" cy="8" r="2" fill="#d03838" /><circle cx="22" cy="22" r="2" fill="#d03838" /></>,
  skCircle: <ellipse cx="12" cy="12" rx="10" ry="10" fill="none" stroke="#333" strokeWidth="1.300" />,
  skFillet: <path d="M1 3h9c8 0 11 5 11 12v8" fill="none" stroke="#b4b4b4" strokeWidth="1.300" />,
  skCorner: <><path d="M1 3h14l8 20" fill="none" stroke="#b4b4b4" strokeWidth="1.300" /><path d="M15 3h7v8" fill="none" stroke="#ccc" strokeDasharray="2 2" /></>,
  skRect: <><path d="M3 4h18v16H3z" fill="none" stroke="#333" strokeWidth="1.400" /><circle cx="3" cy="4" r="2" fill="#d03838" /><circle cx="21" cy="20" r="2" fill="#d03838" /></>,
  skHex: <><path d="M7 2h10l6 10-6 10H7L1 12z" fill="none" stroke="#333" strokeWidth="1.300" /><circle cx="12" cy="12" r="2" fill="#d03838" /></>,
  skOffset: <><path d="M8 9h10v14H8z" fill="#9ab4e0" stroke="#5a70b8" /><path d="M2 5h10M6 0v10" stroke="#c83030" strokeWidth="1.800" /><path d="M22 8c3 4 3 10 0 15" fill="none" stroke="#3a48b8" /><path d="M15 15h6" stroke="#e08020" /></>,
  gTrim: <g stroke="#bdbdbd" strokeWidth="1.100" fill="none"><path d="M3 3l9 20M1 14h20" /><path d="M14 12l8-7 1 3-7 6z" fill="#e2e2e2" /></g>,
  gExt: <g stroke="#bdbdbd" strokeWidth="1.100" fill="none"><path d="M3 3l9 20M1 17h12" /><path d="M12 14l9-9 2 2-8 9z" fill="#eee" /></g>,
  gCross: <g stroke="#bdbdbd" strokeWidth="1.100" fill="none"><path d="M4 3l14 16M1 14h22M14 1v22" strokeDasharray="6 1" /></g>,
  gPar: <g stroke="#bdbdbd" strokeWidth="1.100" fill="none"><path d="M2 14L13 3M6 17L17 6M14 14v9M8 23h14" /></g>,
  gBrk: <g stroke="#bdbdbd" strokeWidth="1.200" fill="none"><path d="M2 4h7v18H2M22 4h-7v18h7M12 1v23" /><path d="M9 6l3-3 3 3" /></g>,
  gPerp: <g stroke="#bdbdbd" strokeWidth="1.100" fill="none"><path d="M4 5l8 7-8 7z" fill="#ddd" /><path d="M8 14L18 3M12 16L22 5M15 14v9M8 23h14" /></g>,

  nav1: <><rect x="4" y="1" width="6" height="6" fill="#f4cf50" stroke="#c09020" /><rect x="9" y="5" width="6" height="6" fill="#f4cf50" stroke="#c09020" /><rect x="2" y="6" width="7" height="6" fill="#f4cf50" stroke="#c09020" /><path d="M12 12v10M12 15h18M12 21h7" stroke="#2838b0" strokeWidth="1.200" /><rect x="19" y="16" width="7" height="6" fill="#f4cf50" stroke="#c09020" /></>,
  nav2: <><path d="M3 3c0-3 9-3 9 0v7c0 2-9 2-9 0z" fill="#d8a0b8" stroke="#802a60" strokeWidth="1.200" /><path d="M12 12v10M12 17h6" stroke="#2838b0" strokeWidth="1.200" /><path d="M14 6h8" stroke="#222" /><circle cx="21" cy="18" r="4" fill="none" stroke="#802a60" /><circle cx="21" cy="18" r="1.500" fill="#802a60" /></>,
  books: <><path d="M1 6h7v18H1z" fill="#f09020" stroke="#b05010" /><path d="M7 6h7v18H7z" fill="#38c840" stroke="#208028" /><path d="M13 6h7v18h-7z" fill="#3090f0" stroke="#1860b0" /><path d="M20 6l5-3v18l-5 3z" fill="#1a70d0" /><path d="M1 6l4-4h5L7 6zM7 6l4-4h5l-3 4zM13 6l4-4h8l-5 4z" fill="#e6e6e6" stroke="#aaa" strokeWidth=".5" /></>,
  info: <><circle cx="9" cy="17" r="7" fill="#1a78d8" /><circle cx="9" cy="17" r="5" fill="#2f8ae4" /><Txt x={9} y={21} s={11} c="#fff" w={700}>i</Txt><path d="M10 6c6 0 10 3 10 10M11 2c8 0 13 5 13 14" fill="none" stroke="#3a62c0" strokeWidth="2" /></>,
  docGlobe: <><path d="M4 1h11l5 5v17H4z" fill="#fff" stroke="#2a70d0" strokeWidth="1.300" /><path d="M15 1v5h5" fill="#bcd4f4" stroke="#2a70d0" /><circle cx="12" cy="15" r="6" fill="#4a90a0" /><path d="M8 13c2-3 5-2 6 0 1 3-3 5-5 4z" fill="#60b858" /></>,
  clock: <><circle cx="12" cy="12" r="11" fill="#bbb" stroke="#888" /><circle cx="12" cy="12" r="8.500" fill="#e8eef8" stroke="#5a6a8a" /><path d="M12 6v6h6" fill="none" stroke="#111" strokeWidth="1.500" /></>,
  users: <><circle cx="16" cy="7" r="4.500" fill="#d8a040" /><path d="M10 18c0-5 3-7 6-7s7 2 7 7z" fill="#2a8a3a" /><circle cx="8" cy="13" r="4.500" fill="#e0a080" /><path d="M1 24c0-5 3-7 7-7s7 2 7 7z" fill="#9040b8" /></>,

  section: <><path d="M1 10h8v9H1zM5 10v9M1 14h8" fill="#fff" stroke="#222" /><path d="M5 8l4-6 2 2-3 5z" fill="#e0a030" /><path d="M12 6h4M14 6v13M12 19h4" stroke="#e02030" strokeWidth="1.200" fill="none" /></>,
  bookset: <><path d="M1 6h5v13H1z" fill="#28a838" stroke="#186820" /><path d="M6 6h5v13H6z" fill="#e08820" stroke="#a05810" /><path d="M11 6h5v13h-5z" fill="#4048d8" stroke="#202890" /><path d="M1 6l3-4h4L6 6zM6 6l3-4h4l-2 4zM11 6l3-4h4l-2 4z" fill="#a8c860" /></>,
};

const Icon = ({ name, w = 24, h }: { name: string; w?: number; h?: number }) => (
  <svg width={w} height={h ?? (w === 30 ? 32 : w)} viewBox={`0 0 ${w === 30 ? 30 : 24} ${w === 30 ? 32 : 24}`} style={{ display: 'block', overflow: 'visible' }}>{ICONS[name]}</svg>
);

type Item = [number, string | ReactNode, number?, number?];

const stripBody = (items: Item[]) => {
  let cursor = 0;
  return items.map(([cx, what, w, h], i) => {
    const isName = typeof what === 'string';
    const width = w ?? (what === 'grip' ? 3 : what === 'sep' ? 1 : what === 'caret' || what === 'caretlow' ? 7 : 24);
    const ml = Math.round(cx - width / 2 - cursor);
    cursor += ml + width;
    let node: ReactNode = what;
    if (what === 'grip') node = <Grip />;
    else if (what === 'sep') node = <Sep />;
    else if (what === 'caret') node = <Caret />;
    else if (what === 'caretlow') node = <Caret $low />;
    else if (isName) node = <Icon name={what as string} w={width} h={h} />;
    return <Slot key={i} $w={width} $ml={ml}>{node}</Slot>;
  });
};

const Strip = ({ items, end }: { items: Item[]; end: number }) => <StripBar $w={end}>{stripBody(items)}</StripBar>;

const row1: Item[] = [
  [4, 'grip'], [23, 'start', 26], [50, <StartLabel>Start</StartLabel>, 26], [70, 'caret'], [90, 'newdoc'], [121, 'open'], [152, 'save'], [170, 'sep'],
  [189, 'scissors'], [220, 'copy'], [251, 'paste'], [282, 'del'], [300, 'sep'], [320, 'undo'], [341, 'caret'], [362, 'redo'], [380, 'sep'],
  [399, 'play'], [421, 'caret'], [428, 'sep'],
  [499.5, <SearchBox>查找命令<Icon name="magnifier" w={16} /></SearchBox>, 125],
  [572, 'caretlow'], [582, 'sep'], [586, 'grip'], [604, 'viewfit'], [626, 'caret'], [638, 'caretlow'], [645, 'sep'], [650, 'grip'],
  [670, 'palette'], [706, 'play'], [728, 'caret'], [736, 'sep'], [755, 'measure'], [777, 'caret'], [798, 'ruler'], [819, 'caret'],
];
const row3: Item[] = [
  [4, 'grip'], [23, 'assy'], [54, 'layerA'], [85, 'layerL'], [104, 'sep'], [121, 'note'], [141, 'sep'], [158, 'cubeOk'], [190, 'toolOk'], [222, 'cube2Ok'], [239, 'sep'],
  [258, 'cubeAbc'], [279, 'caret'], [288, 'sep'], [292, 'grip'], [311, 'sheetView'], [342, 'layerV'], [373, 'tableBino'], [404, 'wrenchPage'], [435, 'list123'], [454, 'sep'],
  [471, 'cubeAbc'], [491, 'sep'], [510, 'axes'], [527, 'sep'], [545, 'hatch'], [577, 'sectBox'], [607, 'detail'], [625, 'sep'],
  [645, 'clines'], [676, 'binoDim'], [708, 'h7Bino'], [738, 'wrenchGrid'], [769, 'dimX'], [800, 'dimAbc'], [819, 'sep'],
  [838, 'gridXY'], [868, 'tri'], [898, 'tableTri'], [930, 'arrowA'], [961, 'checker'], [992, 'xyz'], [1023, 'blank'], [1054, 'balloon'], [1084, 'textBox'], [1115, 'broom'], [1134, 'sep'],
  [1152, 'gearList'], [1184, 'gear'], [1202, 'sep'], [1220, 'wave'], [1242, 'caret'],
];
const row4: Item[] = [
  [4, 'grip'], [22, 'tolIcon'], [42, 'sep'], [60, 'd100', 30], [92, 'dPm', 30], [123, 'dPP', 30], [154, 'dPZ', 30], [185, 'dZP', 30], [215, 'dBox', 30], [246, 'dParen', 30], [277, 'h7', 30],
  [309, 'h7a', 30], [340, 'h7b', 30], [370, 'h7c', 30], [388, 'sep'], [406, 'rSlash'], [438, 'rFlat'], [456, 'sep'], [475, 'dia1'], [506, 'dia2'], [535, 'turn'], [558, 'caretlow'],
];
const row5: Item[] = [
  [71, <SelectBox $w={132}><span /><GrayCaret /></SelectBox>, 132],
  [214.5, <SelectBox $w={139}>仅在工作部件内<GrayCaret /></SelectBox>, 139],
  [292, 'sep'], [306, 'gFilter', 18], [330, 'boxFilter', 20], [343, 'caret'], [362, 'gSnap', 20], [387, 'gTool', 20], [397, 'sep'], [412, 'gSelect', 18], [430, 'caret'], [438, 'sep'],
  [453, 'gDots', 18], [480, 'gDots2', 20], [500, 'gLine', 16], [523, 'gLine', 16], [545, 'gCurve', 18], [568, 'gAxis', 18], [593, 'gTee', 18], [615, 'gRing', 18], [640, 'gRing2', 18], [662, 'gPlus', 16], [685, 'gLine', 16], [707, 'gPage', 18],
];
const bottom: Item[] = [
  [4, 'grip'], [59.5, <SelectBox $w={97}>SHT1<GrayCaret /></SelectBox>, 97], [127, 'flag', 24], [166, <FinishLabel>完成草图</FinishLabel>, 44],
  [206, 'skCurve', 22], [239, 'skLine', 22], [269, 'skArc', 22], [300, 'skCircle', 22], [331, 'skFillet', 22], [361, 'skCorner', 22], [393, 'skRect', 22], [424, 'skHex', 22], [455, 'skOffset', 24],
  [477, 'caret'], [485, 'sep'], [503, 'gTrim', 22], [533, 'gExt', 22], [565, 'gCross', 22], [585, 'sep'], [600, 'gPar', 20], [633, 'gBrk', 22], [665, 'gPerp', 22], [687, 'caret'], [698, 'caretlow'],
];

type Rib = { x0: number; x1: number; c: number; icon: string; lines: string[]; caret?: number; line?: boolean };
const ribbonGroups: { x0: number; x1: number; more?: number; items: Rib[] }[] = [
  { x0: 0, x1: 267, more: 259, items: [
    { x0: 8, x1: 80, c: 43, icon: 'newsheet', lines: ['新建图纸页'], line: true },
    { x0: 80, x1: 168, c: 118, icon: 'viewwiz', lines: ['视图创建向', '导'], caret: 160, line: true },
    { x0: 168, x1: 255, c: 207, icon: 'updview', lines: ['更新视图'], caret: 248 },
  ] },
  { x0: 271, x1: 371, more: 363, items: [{ x0: 276, x1: 360, c: 310, icon: 'quickdim', lines: ['快速尺寸'], caret: 352 }] },
  { x0: 375, x1: 633, more: 625, items: [
    { x0: 380, x1: 443, c: 414, icon: 'noteA', lines: ['注释'] },
    { x0: 443, x1: 534, c: 485, icon: 'fcf', lines: ['特征控制框'], caret: 526, line: true },
    { x0: 534, x1: 622, c: 573, icon: 'center', lines: ['中心标记'], caret: 614 },
  ] },
  { x0: 637, x1: 877, more: 870, items: [
    { x0: 642, x1: 724, c: 677, icon: 'custsym', lines: ['定制符号'], caret: 718 },
    { x0: 724, x1: 792, c: 758, icon: 'editsym', lines: ['编辑定制符', '号'] },
    { x0: 792, x1: 866, c: 829, icon: 'replsym', lines: ['替换定制符', '号'] },
  ] },
  { x0: 881, x1: 969, more: 961, items: [{ x0: 886, x1: 955, c: 920, icon: 'editset', lines: ['编辑设置'] }] },
  { x0: 973, x1: 1073, more: 1065, items: [{ x0: 978, x1: 1062, c: 1013, icon: 'tablenote', lines: ['表格注释'], caret: 1054 }] },
];

const Ribbons = () => (
  <Ribbon>
    {ribbonGroups.map(g => (
      <RibbonGroup key={g.x0} $w={g.x1 - g.x0}>
        <RibbonGrip />
        {g.items.map((it, i) => {
          const lead = i === 0 ? it.x0 - g.x0 - 4 : 0;
          const bw = 2 * (it.c - it.x0);
          return (
            <RibbonItem key={it.icon} $w={it.x1 - it.x0 + lead} $line={it.line} $lead={lead}>
              <RibbonBody $w={bw}>
                <Icon name={it.icon} w={26} h={26} />
                <RibbonLabel>{it.lines.map(l => <div key={l}>{l}</div>)}</RibbonLabel>
              </RibbonBody>
              {it.caret && <RibbonCaret $ml={it.caret - 3.5 - it.x0 - bw}><Caret /></RibbonCaret>}
            </RibbonItem>
          );
        })}
        {g.more && <RibbonMore $r={g.x1 - g.more - 5.5}><Caret /></RibbonMore>}
      </RibbonGroup>
    ))}
  </Ribbon>
);

const menus: [string, number][] = [
  ['文件(F)', 0], ['编辑(E)', 13], ['视图(V)', 13], ['插入(S)', 14], ['格式(R)', 13], ['工具(T)', 14], ['装配(A)', 13], ['信息(I)', 14], ['分析(L)', 14],
  ['首选项(P)', 20], ['窗口(O)', 13], ['GC工具箱', 13], ['帮助(H)', 13],
];

const treeRows: { t: string; lvl: number; box?: string }[] = [
  { t: '全部', lvl: 0 }, { t: '几何体', lvl: 0, box: '−' }, { t: '体', lvl: 1, box: '−' }, { t: '实体', lvl: 2 }, { t: '小平面体', lvl: 2 },
  { t: '基准', lvl: 1, box: '−' }, { t: '坐标系', lvl: 2 }, { t: '图纸对象', lvl: 0, box: '+' },
];

const libRows = [
  { t: '2D Section Library', icon: 'section' }, { t: '定制符号库', icon: 'bookset' }, { t: '2D 组件库', icon: 'bookset' },
];

const Chevron = () => (
  <svg width="12" height="9" viewBox="0 0 12 9"><path d="M1 1l5 6 5-6" fill="none" stroke="#2a8cc4" strokeWidth="2.400" /></svg>
);
const PlusMark = () => (
  <svg width="12" height="12" viewBox="0 0 12 12"><path d="M6 0v12M0 6h12" stroke="#0e46d4" strokeWidth="3" /></svg>
);
const MinusMark = () => (
  <svg width="12" height="4" viewBox="0 0 12 4"><path d="M0 2h12" stroke="#0e46d4" strokeWidth="3" /></svg>
);
const WinX = ({ s = 12, c = '#555', w = 1.6 }: any) => (
  <svg width={s} height={s} viewBox="0 0 12 12"><path d="M1 1l10 10M11 1L1 11" stroke={c} strokeWidth={w} /></svg>
);
const WinRestore = ({ c = '#555', w = 1.2 }: any) => (
  <svg width="12" height="11" viewBox="0 0 12 11"><path d="M3.500 3V.5h8v6H8.500M.5 3.500h8v7h-8z" fill="none" stroke={c} strokeWidth={w} /></svg>
);
const WinMin = ({ c = '#555' }: any) => (
  <svg width="8" height="12" viewBox="0 0 8 12"><path d="M0 10.500h8" stroke={c} strokeWidth="2" /></svg>
);

const Drawing = () => (
  <svg width="1556" height="727" viewBox="363 257 1556 727" style={{ display: 'block' }}>
    <path d="M363 268H1920M363 937H1920" stroke="#333" strokeWidth="1.300" strokeDasharray="9 6" />
    <g fill="none" stroke="#111">
      <path d="M990.500 444H1149.500V603H990.500z" strokeWidth="2.200" />
      <path d="M991 535H1058V603" strokeWidth="1.200" stroke="#444" />
      <path d="M1150 491A159 159 0 1 1 1104 603" strokeWidth="2" />
      <path d="M805 603L845 563L884 603Z" strokeWidth="1.800" />
      <path d="M845 558V608" strokeWidth="1" stroke="#666" strokeDasharray="14 2 2 2" />
    </g>
    <path d="M990.500 473l-2.500 12h5zM1120 603l-12-3v6z" fill="#111" />
    <path d="M986 597l4.500 10 4.500-10" fill="none" stroke="#111" />
    <circle cx="990.500" cy="603" r="2.500" fill="#111" />
    <text x="990" y="468" fontSize="12" textAnchor="middle" fontFamily='"Liberation Sans", sans-serif' fill="#222">Z</text>
    <text x="1131" y="608" fontSize="13" textAnchor="middle" fontFamily='"Liberation Sans", sans-serif' fill="#222">X</text>
    <g>
      <circle cx="970" cy="780" r="12" fill="none" stroke="#333" strokeDasharray="8 4" />
      <path d="M955 780H985M970 765V795" stroke="#222" strokeWidth="3.400" />
      <path d="M955 780H985M970 765V795" stroke="#fff" strokeWidth="1.600" />
    </g>
    <g transform="translate(2 2)" opacity=".3"><path d="M1045 842L1098 757" stroke="#333" strokeWidth="3" /><path d="M1106 745L1088 762L1100 770Z" fill="#333" /></g>
    <path d="M1045 842L1095 760" stroke="#ea1c1c" strokeWidth="2.800" />
    <path d="M1106 745L1088 761L1100 770Z" fill="#ea1c1c" />
  </svg>
);

export default function App() {
  return (
    <Page>
      <Global />
      <TitleBar>
        <Logo>NX</Logo>
        <TitleText>NX 10 - 制图 - [_model1.prt （修改的） ]</TitleText>
        <Brand>SIEMENS</Brand>
        <WinButtons><WinMin /><WinRestore /><WinX /></WinButtons>
      </TitleBar>
      <MenuBar>
        <MenuIcon><Icon name="nxmenu" w={18} /></MenuIcon>
        {menus.map(([m, ml]) => <MenuItem key={m} $ml={ml}>{m}</MenuItem>)}
        <WinButtons style={{ marginLeft: 'auto', paddingRight: 9 }}><WinMin c="#222" /><WinRestore c="#222" w={1.4} /><WinX s={10} c="#222" w={2.2} /></WinButtons>
      </MenuBar>
      <Row $h={34}><Strip items={row1} end={827} /></Row>
      <Ribbons />
      <Row $h={34}><Strip items={row3} end={1250} /></Row>
      <Row $h={33}><Strip items={row4} end={566} /></Row>
      <Row $h={32}><BareBar $w={1920}>{stripBody(row5)}</BareBar></Row>
      <Main>
        <SideTabs>
          <SideSlot $mt={1}><Icon name="gear" w={18} /></SideSlot>
          <SideSlot $mt={25}><Icon name="nav1" w={26} /></SideSlot>
          <SideSlot $mt={18}><Icon name="nav2" w={26} /></SideSlot>
          <ActiveTab><Icon name="books" w={26} /></ActiveTab>
          <SideSlot $mt={19}><Icon name="info" w={26} /></SideSlot>
          <SideSlot $mt={30}><Icon name="docGlobe" w={24} /></SideSlot>
          <SideSlot $mt={30}><Icon name="clock" w={24} /></SideSlot>
          <SideSlot $mt={18}><Icon name="users" w={26} /></SideSlot>
        </SideTabs>
        <Panel>
          <PanelHead>重用库<MaxBox /></PanelHead>
          <LibTable>
            <LibHead>名称</LibHead>
            {Array.from({ length: 30 }, (_, i) => (
              <LibRow key={i} $alt={i % 2 === 1}>
                {libRows[i] && (
                  <>
                    <ExpanderGap />
                    <Expander>+</Expander>
                    <Dots />
                    <Icon name={libRows[i].icon} w={18} />
                    <LibLabel>{libRows[i].t}</LibLabel>
                  </>
                )}
              </LibRow>
            ))}
          </LibTable>
          <Grabber />
          <Section>搜索<Chevron /></Section>
          <Section>成员选择<Chevron /></Section>
          <Section>预览<Chevron /></Section>
        </Panel>
        <Canvas>
          <Drawing />
          <SheetLabel>Sheet "SHT1" 工作</SheetLabel>
        </Canvas>
      </Main>
      <BottomBar>{stripBody(bottom)}</BottomBar>
      <Status>针对一个对象选取"显示"或"隐藏"。</Status>

      <Dialog>
        <DialogTitle>
          <DialogGear><svg width="16" height="16" viewBox="0 0 16 16"><circle cx="8" cy="8" r="5" fill="none" stroke="#fff" strokeWidth="3" /><circle cx="8" cy="8" r="6.800" fill="none" stroke="#fff" strokeWidth="1.600" strokeDasharray="2.600 2.740" /></svg></DialogGear>
          显示和隐藏
          <DialogClose><WinX s={12} c="#fff" w={2} /></DialogClose>
        </DialogTitle>
        <TypeTable>
          <GridRow $head>
            <HeadCell>类型</HeadCell><HeadCell>显示</HeadCell><HeadCell>隐藏</HeadCell><HeadCell />
          </GridRow>
          {Array.from({ length: 16 }, (_, i) => {
            const r = treeRows[i];
            return (
              <GridRow key={i} $alt={i % 2 === 1}>
                {r ? (
                  <TreeCell $lvl={r.lvl}><TreeBox $empty={!r.box}>{r.box}</TreeBox>{r.t}</TreeCell>
                ) : <Cell />}
                <Cell>{r && <PlusMark />}</Cell>
                <Cell>{r && <MinusMark />}</Cell>
                <Cell />
              </GridRow>
            );
          })}
          <TreeGuides width="80" height="170">
            <g fill="none" stroke="#a0a0a0" strokeDasharray="1 1">
              <path d="M9 10V150M9 10H20M15 30H20" />
              <path d="M28 40V110M34 50H39M34 110H39" />
              <path d="M47 60V90H57M47 70H57M47 125V130H57" />
              <path d="M15 150H20" />
            </g>
          </TreeGuides>
        </TypeTable>
        <DialogFoot><CloseBtn>关闭</CloseBtn></DialogFoot>
      </Dialog>

      <Sogou>
        <SogouChar>中</SogouChar>
        <SogouChar>°,</SogouChar>
        <SogouSlot><svg width="12" height="18" viewBox="0 0 12 18"><rect x="3" y="0" width="6" height="11" rx="3" fill="#0a6fe0" /><path d="M1 8c0 6 10 6 10 0M6 13v4" fill="none" stroke="#0a6fe0" strokeWidth="1.500" /></svg></SogouSlot>
        <SogouSlot><svg width="15" height="14" viewBox="0 0 15 14"><rect width="15" height="14" rx="2" fill="#0a6fe0" /><path d="M2 4h11M2 7h11M3 10.500h9" stroke="#fff" strokeDasharray="1.500 1" /></svg></SogouSlot>
        <SogouSlot><svg width="16" height="15" viewBox="0 0 16 15"><path d="M4 0l4 2 4-2 4 3-2 3-1-1v10H3V5L2 6 0 3z" fill="#0a6fe0" /></svg></SogouSlot>
        <SogouSlot><svg width="15" height="15" viewBox="0 0 15 15"><circle cx="7.500" cy="8" r="7" fill="#0a6fe0" /><circle cx="5" cy="8" r="1.300" fill="#fff" /><circle cx="10" cy="8" r="1.300" fill="#fff" /></svg></SogouSlot>
        <SogouSlot><svg width="14" height="14" viewBox="0 0 14 14" fill="#0a6fe0"><rect width="6" height="6" rx="2" /><rect x="8" width="6" height="6" rx="2" /><rect y="8" width="6" height="6" rx="2" /><rect x="8" y="8" width="6" height="6" rx="2" /></svg></SogouSlot>
        <SogouSlot><svg width="14" height="16" viewBox="0 0 14 16"><path d="M7 0l2 3h5l-2 5 2 5H9l-2 3-2-3H0l2-5-2-5h5z" fill="#0a6fe0" /><circle cx="7" cy="8" r="2.500" fill="#fff" /></svg></SogouSlot>
      </Sogou>
      <SogouLogo>S</SogouLogo>

      <Watermark>
        <svg width="42" height="42" viewBox="0 0 42 42" style={{ flex: 'none' }}>
          <path d="M40 1C20 4 3 14 2 26c0 6 6 8 12 6C6 30 6 24 12 18 18 11 28 6 40 1z" fill="#7aa6dc" />
          <path d="M12 24c6-8 24-8 26 0 1 6-10 12-20 9 8-1 14-4 12-8-2-3-10-3-18-1z" fill="#6cc8a0" />
          <path d="M8 40c4-2 8-5 12-6-2 4-6 7-12 8z" fill="#e8e070" />
        </svg>
        <WmText>
          <WmMain>极光下载站</WmMain>
          <WmSub>www.xz7.com</WmSub>
        </WmText>
      </Watermark>
      <StatusIcons>
        <svg width="12" height="16" viewBox="0 0 12 16"><path d="M0 0h12v16H0z" fill="#c8c8c8" /><path d="M2 2l8 8M10 2l-8 8" stroke="#888" /></svg>
        <svg width="12" height="16" viewBox="0 0 12 16"><path d="M.5.5h11v15H.5z" fill="#fff" stroke="#666" /><path d="M3 3h6v9H3z" fill="#5a8ad0" /></svg>
      </StatusIcons>
    </Page>
  );
}
